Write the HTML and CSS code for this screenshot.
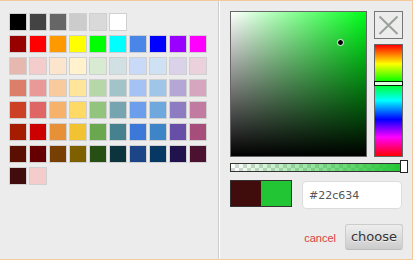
FILE: index.html
```html
<!DOCTYPE html>
<html>
<head>
<meta charset="utf-8">
<link rel="stylesheet" href="styles.css">
</head>
<body>
<div class="sp-container">
  <div class="palette-col">
    <div class="row">
      <span class="sw" style="background:#000000"></span>
      <span class="sw" style="background:#434343"></span>
      <span class="sw" style="background:#666666"></span>
      <span class="sw" style="background:#cccccc"></span>
      <span class="sw" style="background:#d9d9d9"></span>
      <span class="sw" style="background:#ffffff"></span>
    </div>
    <div class="row">
      <span class="sw" style="background:#980000"></span>
      <span class="sw" style="background:#ff0000"></span>
      <span class="sw" style="background:#ff9900"></span>
      <span class="sw" style="background:#ffff00"></span>
      <span class="sw" style="background:#00ff00"></span>
      <span class="sw" style="background:#00ffff"></span>
      <span class="sw" style="background:#4a86e8"></span>
      <span class="sw" style="background:#0000ff"></span>
      <span class="sw" style="background:#9900ff"></span>
      <span class="sw" style="background:#ff00ff"></span>
    </div>
    <div class="row">
      <span class="sw" style="background:#e6b8af"></span>
      <span class="sw" style="background:#f4cccc"></span>
      <span class="sw" style="background:#fce5cd"></span>
      <span class="sw" style="background:#fff2cc"></span>
      <span class="sw" style="background:#d9ead3"></span>
      <span class="sw" style="background:#d0e0e3"></span>
      <span class="sw" style="background:#c9daf8"></span>
      <span class="sw" style="background:#cfe2f3"></span>
      <span class="sw" style="background:#d9d2e9"></span>
      <span class="sw" style="background:#ead1dc"></span>
    </div>
    <div class="row">
      <span class="sw" style="background:#dd7e6b"></span>
      <span class="sw" style="background:#ea9999"></span>
      <span class="sw" style="background:#f9cb9c"></span>
      <span class="sw" style="background:#ffe599"></span>
      <span class="sw" style="background:#b6d7a8"></span>
      <span class="sw" style="background:#a2c4c9"></span>
      <span class="sw" style="background:#a4c2f4"></span>
      <span class="sw" style="background:#9fc5e8"></span>
      <span class="sw" style="background:#b4a7d6"></span>
      <span class="sw" style="background:#d5a6bd"></span>
    </div>
    <div class="row">
      <span class="sw" style="background:#cc4125"></span>
      <span class="sw" style="background:#e06666"></span>
      <span class="sw" style="background:#f6b26b"></span>
      <span class="sw" style="background:#ffd966"></span>
      <span class="sw" style="background:#93c47d"></span>
      <span class="sw" style="background:#76a5af"></span>
      <span class="sw" style="background:#6d9eeb"></span>
      <span class="sw" style="background:#6fa8dc"></span>
      <span class="sw" style="background:#8e7cc3"></span>
      <span class="sw" style="background:#c27ba0"></span>
    </div>
    <div class="row">
      <span class="sw" style="background:#a61c00"></span>
      <span class="sw" style="background:#cc0000"></span>
      <span class="sw" style="background:#e69138"></span>
      <span class="sw" style="background:#f1c232"></span>
      <span class="sw" style="background:#6aa84f"></span>
      <span class="sw" style="background:#45818e"></span>
      <span class="sw" style="background:#3c78d8"></span>
      <span class="sw" style="background:#3d85c6"></span>
      <span class="sw" style="background:#674ea7"></span>
      <span class="sw" style="background:#a64d79"></span>
    </div>
    <div class="row">
      <span class="sw" style="background:#5b0f00"></span>
      <span class="sw" style="background:#660000"></span>
      <span class="sw" style="background:#783f04"></span>
      <span class="sw" style="background:#7f6000"></span>
      <span class="sw" style="background:#274e13"></span>
      <span class="sw" style="background:#0c343d"></span>
      <span class="sw" style="background:#1c4587"></span>
      <span class="sw" style="background:#073763"></span>
      <span class="sw" style="background:#20124d"></span>
      <span class="sw" style="background:#4c1130"></span>
    </div>
    <div class="row">
      <span class="sw" style="background:#400c0c"></span>
      <span class="sw" style="background:#f4cccc"></span>
    </div>
  </div>
  <div class="picker-col">
    <div class="top">
      <div class="satval">
        <div class="dragger"></div>
      </div>
      <div class="side">
        <div class="clear">
          <svg width="27" height="26" viewBox="0 0 27 26">
            <path d="M4.5 4.5 L22.5 22 M22.5 4.5 L4.5 22" stroke="#9aa09a" stroke-width="2" fill="none"/>
          </svg>
        </div>
        <div class="hue">
          <div class="hue-slider"></div>
        </div>
      </div>
    </div>
    <div class="alpha">
      <div class="alpha-fill"></div>
      <div class="alpha-handle"></div>
    </div>
    <div class="preview-row">
      <div class="preview">
        <span class="initial"></span>
        <span class="current"></span>
      </div>
      <input class="hex" type="text" value="#22c634">
    </div>
    <div class="buttons">
      <a class="cancel">cancel</a>
      <button class="choose">choose</button>
    </div>
  </div>
</div>
</body>
</html>
```
FILE: styles.css
```css
html, body {
  margin: 0;
  padding: 0;
  background: #ffffff;
}

.sp-container {
  display: flex;
  box-sizing: border-box;
  width: 413px;
  height: 260px;
  background: #ececec;
  border-top: 1px solid #f6c99c;
  border-right: 1px solid #f6c99c;
  border-bottom: 1px solid #f6c99c;
  font-family: "DejaVu Sans", sans-serif;
}

.palette-col {
  box-sizing: border-box;
  width: 219px;
  flex: none;
  padding: 10px 0 0 8px;
  border-right: 1px solid #cccccc;
}

.row {
  display: flex;
}

.sw {
  display: block;
  width: 16px;
  height: 16px;
  margin: 2px 1px;
  border: 1px solid #d0d0d0;
}

.picker-col {
  box-sizing: border-box;
  flex: 1;
  border-left: 1px solid #ffffff;
  padding: 10px 9px 0 10px;
  display: flex;
  flex-direction: column;
}

.top {
  display: flex;
  gap: 7px;
}

.satval {
  position: relative;
  box-sizing: border-box;
  width: 137px;
  height: 146px;
  border: 1px solid #666666;
  background:
    linear-gradient(to top, #000000, rgba(0, 0, 0, 0)),
    linear-gradient(to right, #ffffff, rgba(255, 255, 255, 0)),
    #00ff1a;
}

.dragger {
  position: absolute;
  left: 106px;
  top: 27px;
  width: 5px;
  height: 5px;
  border: 1px solid #ffffff;
  border-radius: 50%;
  background: #000000;
}

.side {
  display: flex;
  flex-direction: column;
  gap: 5px;
  width: 29px;
}

.clear {
  box-sizing: border-box;
  width: 29px;
  height: 28px;
  border: 1px solid #777777;
  display: flex;
}

.clear svg {
  display: block;
}

.hue {
  position: relative;
  box-sizing: border-box;
  height: 113px;
  border: 1px solid #666666;
  background: linear-gradient(to bottom, #ff0000 0%, #ffff00 17%, #00ff00 33%, #00ffff 50%, #0000ff 67%, #ff00ff 83%, #ff0000 100%);
}

.hue-slider {
  position: absolute;
  top: 36px;
  left: -1px;
  right: -1px;
  height: 3px;
  border: 1px solid #000000;
  background: #ffffff;
  opacity: 0.85;
}

.alpha {
  position: relative;
  box-sizing: border-box;
  height: 9px;
  margin-top: 6px;
  border: 1px solid #333333;
  background-color: #ffffff;
  background-image:
    linear-gradient(45deg, #d6d6d6 25%, transparent 25%, transparent 75%, #d6d6d6 75%),
    linear-gradient(45deg, #d6d6d6 25%, transparent 25%, transparent 75%, #d6d6d6 75%);
  background-size: 8px 8px;
  background-position: 0 0, 4px 4px;
}

.alpha-fill {
  height: 100%;
  background: linear-gradient(to right, rgba(34, 198, 52, 0), #22c634);
}

.alpha-handle {
  position: absolute;
  top: -4px;
  right: -6px;
  box-sizing: border-box;
  width: 8px;
  height: 13px;
  border: 1px solid #222222;
  background: #ffffff;
}

.preview-row {
  display: flex;
  align-items: flex-start;
  gap: 10px;
  margin-top: 8px;
}

.preview {
  display: flex;
  border: 1px solid #333333;
}

.initial, .current {
  display: block;
  width: 30px;
  height: 25px;
}

.initial {
  background: #400c0c;
}

.current {
  background: #22c634;
}

.hex {
  box-sizing: border-box;
  width: 100px;
  height: 28px;
  margin: 1px 0 0 0;
  padding: 0 6px;
  border: 1px solid #dcdcdc;
  border-radius: 4px;
  background: #ffffff;
  font-family: "DejaVu Sans", sans-serif;
  font-size: 11px;
  color: #555555;
  outline: none;
}

.buttons {
  display: flex;
  justify-content: flex-end;
  align-items: center;
  gap: 9px;
  margin-top: 15px;
}

.cancel {
  font-family: "Liberation Sans", Arial, sans-serif;
  font-size: 11px;
  color: #d93f3f;
  padding-top: 2px;
}

.choose {
  box-sizing: border-box;
  height: 26px;
  width: 58px;
  padding: 0 4px;
  border: 1px solid #cccccc;
  border-bottom-color: #bbbbbb;
  border-radius: 3px;
  background: linear-gradient(to bottom, #eeeeee, #cccccc);
  color: #333333;
  font-family: "DejaVu Sans", sans-serif;
  font-size: 13px;
  line-height: 14px;
  text-shadow: 0 1px 0 #eeeeee;
}
```
